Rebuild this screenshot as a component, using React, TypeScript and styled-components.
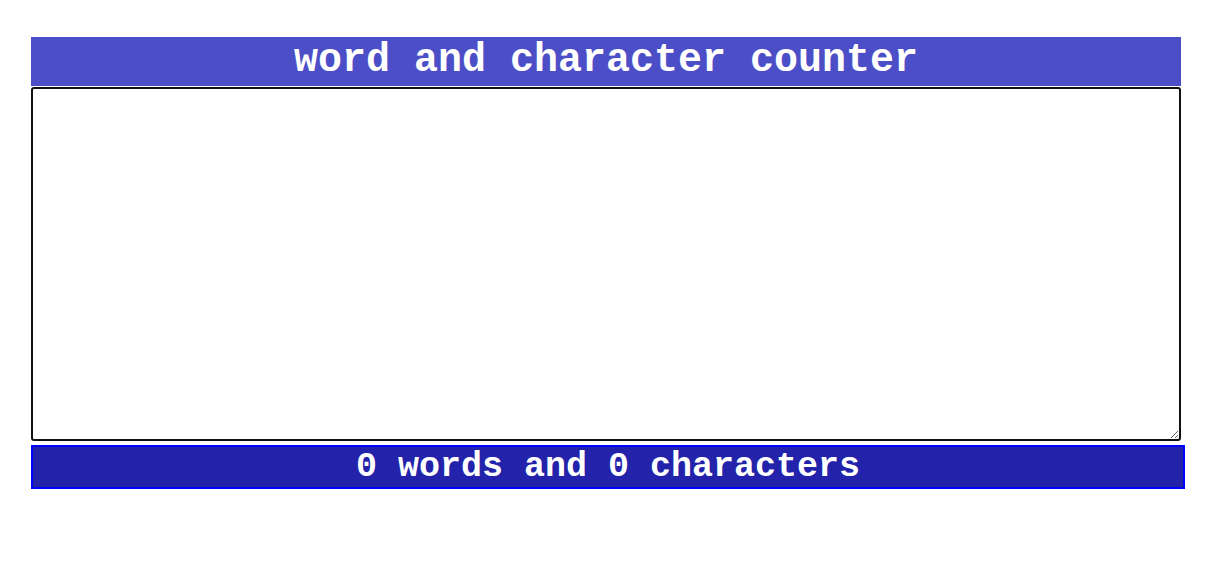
import styled, { createGlobalStyle } from "styled-components";
import { useState } from "react";

const GlobalStyle = createGlobalStyle`
  body {
    margin: 0;
    background: #ffffff;
    font-family: "Liberation Mono", "Courier New", monospace;
  }
`;

const countWords = (text: string) =>
  text.trim() === "" ? 0 : text.trim().split(/\s+/).length;

export default function App() {
  const [text, setText] = useState("");

  return (
    <>
      <GlobalStyle />
      <Page>
        <Counter>
          <Title>word and character counter</Title>
          <Input value={text} onChange={(e) => setText(e.target.value)} />
          <Result>
            {countWords(text)} words and {text.length} characters
          </Result>
        </Counter>
      </Page>
    </>
  );
}

const Page = styled.div`
  padding: 37px 0 0 31px;
`;

const Counter = styled.div`
  width: 1154px;
  display: flex;
  flex-direction: column;
`;

const Title = styled.h1`
  width: 1150px;
  height: 49px;
  margin: 0;
  background-color: #4c4ec7;
  color: #ffffff;
  font-family: "Courier New", "Liberation Mono", monospace;
  font-size: 40px;
  font-weight: 700;
  line-height: 47px;
  text-align: center;
`;

const Input = styled.textarea`
  box-sizing: border-box;
  width: 1150px;
  height: 354px;
  margin: 1px 0 4px;
  border: 2px solid #111111;
  border-radius: 3px;
  padding: 4px;
  font-family: "Liberation Mono", "Courier New", monospace;
  font-size: 16px;
  outline: none;
`;

const Result = styled.div`
  box-sizing: border-box;
  width: 1154px;
  height: 44px;
  background-color: #2222aa;
  border: 2px solid #0000ff;
  color: #ffffff;
  font-family: "Courier New", "Liberation Mono", monospace;
  font-size: 35px;
  font-weight: 700;
  line-height: 41px;
  text-align: center;
`;
